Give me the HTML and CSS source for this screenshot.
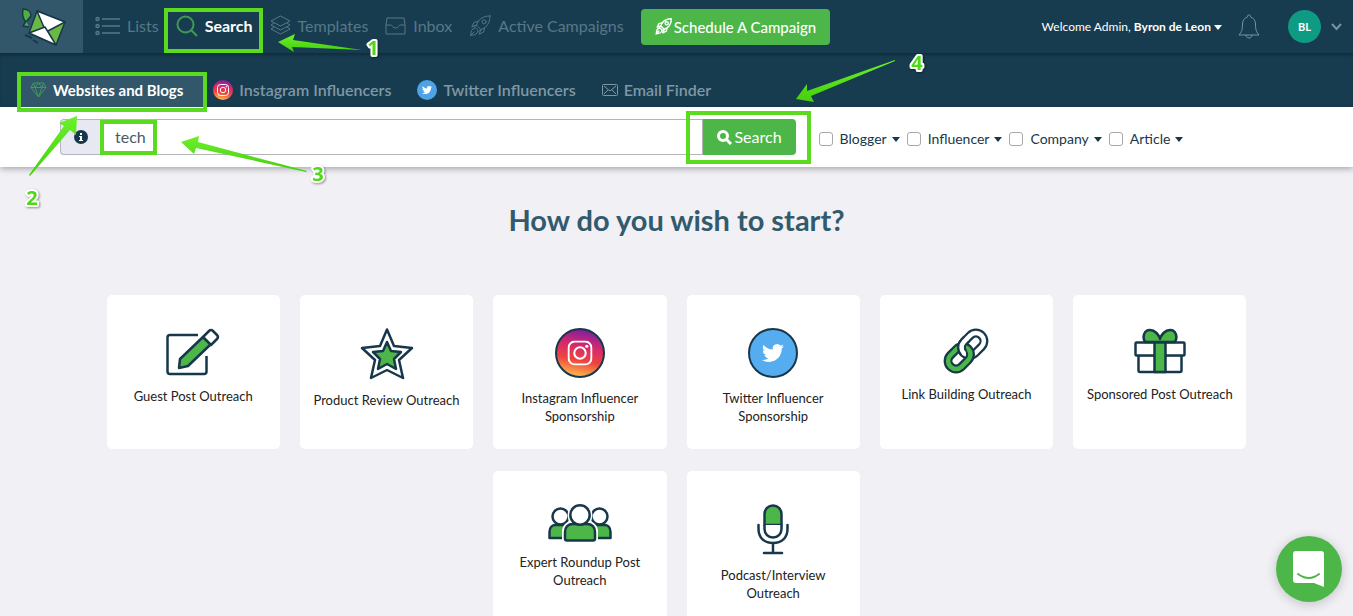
FILE: index.html
```html
<!DOCTYPE html>
<html lang="en">
<head>
  <meta charset="UTF-8" />
  <meta name="viewport" content="width=device-width, initial-scale=1.0" />
  <title>Search - Websites and Blogs</title>
  <link rel="stylesheet" href="styles.css">
</head>
<body>
  <!-- shared icons -->
  <svg class="defs" width="0" height="0" aria-hidden="true">
    <defs>
      <linearGradient id="insta" x1="0.6" y1="0" x2="0.4" y2="1">
        <stop offset="0" stop-color="#7a1fa0" />
        <stop offset="0.35" stop-color="#d62a6c" />
        <stop offset="0.65" stop-color="#ee4440" />
        <stop offset="1" stop-color="#fdc04d" />
      </linearGradient>
      <linearGradient id="arrow" x1="0" y1="0" x2="0" y2="1">
        <stop offset="0" stop-color="#6cf02c" />
        <stop offset="1" stop-color="#45cf0c" />
      </linearGradient>
      <symbol id="bird" viewBox="0 0 24 24">
        <path d="M23.95 4.57a10 10 0 0 1-2.82.77 4.96 4.96 0 0 0 2.16-2.72c-.95.55-2 .96-3.13 1.18a4.92 4.92 0 0 0-8.38 4.48C7.69 8.1 4.07 6.13 1.64 3.16a4.82 4.82 0 0 0-.67 2.48c0 1.71.87 3.21 2.19 4.1a4.9 4.9 0 0 1-2.23-.62v.06a4.92 4.92 0 0 0 3.95 4.83 5 5 0 0 1-2.21.08 4.94 4.94 0 0 0 4.6 3.42A9.87 9.87 0 0 1 0 19.54a13.99 13.99 0 0 0 7.55 2.21c9.05 0 14-7.5 14-13.99 0-.21 0-.42-.02-.63a9.94 9.94 0 0 0 2.46-2.55z" />
      </symbol>
      <symbol id="camera" viewBox="0 0 24 24">
        <g fill="none" stroke="currentColor" stroke-width="2">
          <rect x="1" y="1" width="22" height="22" rx="6" />
          <circle cx="12" cy="12" r="5.5" />
        </g>
        <circle cx="18.5" cy="5.5" r="1.5" fill="currentColor" />
      </symbol>
      <symbol id="rocket" viewBox="0 0 24 24">
        <g fill="none" stroke="currentColor" stroke-linejoin="round" stroke-linecap="round">
          <path d="M23 1c-6 0-10 2-13 6l-2 4 5 5 4-2c4-3 6-7 6-13z" />
          <circle cx="16.500" cy="7.500" r="2.200" />
          <path d="M10 7L5.500 8 3 13l5-2M17 14l-1 4.500L11 21l2-5M8 11l-2 2 5 5 2-2M6 14.500c-3 .5-4 3-4 7.500 4.500 0 7-1 7.500-4M5.500 18.500L1.500 22.500" />
        </g>
      </symbol>
    </defs>
  </svg>

  <header class="topbar">
    <a class="logo" href="#" aria-label="Home">
      <svg width="48" height="42" viewBox="0 0 48 42">
        <g stroke="#17384a" stroke-width="1.500" stroke-linejoin="round">
          <path d="M5 3c5 0 8 3 8 7l-5 6C4 12 4 8 5 3z" fill="#4fae3f" />
          <path d="M8 15l-3 5 6 1" fill="#4fae3f" />
          <path d="M19 5l28 11-9 23-27-12z" fill="#6cb845" />
          <path d="M19 5l28 11-19 10z" fill="#fff" />
          <path d="M11 27l16-6 11 18z" fill="#fff" />
          <path d="M7 29l7 3M15 34l5 3" fill="none" stroke-width="2" />
        </g>
      </svg>
    </a>
    <nav class="main-nav">
      <a href="#">
        <svg width="25" height="20" viewBox="0 0 25 20" fill="none" stroke="currentColor" stroke-width="1.500">
          <circle cx="2.500" cy="3" r="1.500" /><circle cx="2.500" cy="10" r="1.500" /><circle cx="2.500" cy="17" r="1.500" />
          <path d="M7 3h18M7 10h18M7 17h18" />
        </svg>
        Lists
      </a>
      <a href="#" class="active">
        <svg width="22" height="22" viewBox="0 0 22 22" fill="none" stroke="#3f9a55" stroke-width="2">
          <circle cx="9.500" cy="9.500" r="8" /><path d="M15.500 15.500L21 21" />
        </svg>
        Search
      </a>
      <a href="#">
        <svg width="21" height="21" viewBox="0 0 21 21" fill="none" stroke="currentColor" stroke-linejoin="round">
          <path d="M10.500 1L20 6l-9.500 5L1 6zM4 8l-3 2 9.500 5L20 10l-3-2M4 12l-3 2 9.500 5 9.500-5-3-2" />
        </svg>
        Templates
      </a>
      <a href="#">
        <svg width="21" height="18" viewBox="0 0 21 18" fill="none" stroke="currentColor" stroke-linejoin="round">
          <path d="M2 1h17l1 7v9H1V8zM1 8h5c1 0 1.500 3 4.500 3S14 8 15 8h5" />
        </svg>
        Inbox
      </a>
      <a href="#">
        <svg width="22" height="22"><use href="#rocket" /></svg>
        Active Campaigns
      </a>
      <button type="button" class="schedule"><svg width="17" height="17" stroke-width="2"><use href="#rocket" /></svg>Schedule A Campaign</button>
    </nav>
    <div class="user">
      <button type="button" class="welcome">Welcome Admin, <b>Byron de Leon</b> <span class="caret"></span></button>
      <button type="button" class="bell" aria-label="Notifications">
        <svg width="22" height="26" viewBox="0 0 22 26" fill="none" stroke="currentColor" stroke-linejoin="round">
          <path d="M11 1c-1.500 0-1.500 1-1.500 2C6 4 4.500 7 4.500 10c0 6-1 8-3.500 11h20c-2.500-3-3.500-5-3.500-11 0-3-1.500-6-5-7 0-1 0-2-1.500-2zM8 21c0 4 6 4 6 0" />
        </svg>
      </button>
      <span class="avatar">BL</span>
      <button type="button" class="more" aria-label="Account menu">
        <svg width="11" height="8" viewBox="0 0 11 8" fill="none" stroke="currentColor" stroke-width="2"><path d="M1 1l4.500 5L10 1" /></svg>
      </button>
    </div>
  </header>

  <nav class="sub-nav">
    <a href="#" class="active">
      <svg width="17" height="16" viewBox="0 0 17 16" fill="none" stroke="#3f9a55" stroke-linejoin="round">
        <path d="M3.500 1h10L16 5.500 8.500 15 1 5.500zM1 5.500h15M5 5.500L8.500 15 12 5.500 8.500 1 5 5.500 3.500 1M12 5.500L13.500 1" />
      </svg>
      Websites and Blogs
    </a>
    <a href="#">
      <svg width="20" height="20" viewBox="0 0 20 20" color="#fff"><circle cx="10" cy="10" r="10" fill="url(#insta)" /><use href="#camera" x="4" y="4" width="12" height="12" /></svg>
      Instagram Influencers
    </a>
    <a href="#">
      <svg width="20" height="20" viewBox="0 0 20 20" fill="#fff"><circle cx="10" cy="10" r="10" fill="#4da3e6" /><use href="#bird" x="5" y="5" width="10" height="10" /></svg>
      Twitter Influencers
    </a>
    <a href="#">
      <svg width="16" height="12" viewBox="0 0 16 12" fill="none" stroke="currentColor"><rect x="0.500" y="0.500" width="15" height="11" rx="1" /><path d="M2 2l6 5 6-5M2 10l4-4M14 10l-4-4" /></svg>
      Email Finder
    </a>
  </nav>

  <form class="search-bar">
    <div class="search-group">
      <label class="addon" for="keyword" aria-label="Keyword">
        <svg width="14" height="14" viewBox="0 0 14 14"><circle cx="7" cy="7" r="7" fill="#17384a" /><path d="M5 6h3v4h1v1H5v-1h1V7H5zM6 3h2v2H6z" fill="#fff" /></svg>
      </label>
      <input type="text" id="keyword" value="tech">
      <button type="submit">
        <svg width="15" height="15" viewBox="0 0 15 15" fill="none" stroke="#fff" stroke-width="3"><circle cx="6" cy="6" r="4.500" /><path d="M9.500 9.500l4.500 4.500" /></svg>
        Search
      </button>
    </div>
    <div class="filters">
      <label><input type="checkbox">Blogger <span class="caret"></span></label>
      <label><input type="checkbox">Influencer <span class="caret"></span></label>
      <label><input type="checkbox">Company <span class="caret"></span></label>
      <label><input type="checkbox">Article <span class="caret"></span></label>
    </div>
  </form>

  <main>
    <h1>How do you wish to start?</h1>
    <div class="cards">
      <a class="card" href="#">
        <svg width="54" height="48" viewBox="0 0 54 48" fill="none" stroke="#17384a" stroke-width="2.500" stroke-linejoin="round">
          <path d="M32 7H4Q1.500 7 1.500 9.500V43.500Q1.500 46 4 46H38Q40.500 46 40.500 43.500V28" />
          <path d="M37 9l8 7-23 22-9 2 1-9z" fill="#4cb748" />
          <path d="M37 9l6-6q2-2 4 0l4 4q2 2 0 4l-6 6z" fill="#fff" />
        </svg>
        <span>Guest Post Outreach</span>
      </a>
      <a class="card" href="#">
        <svg width="54" height="52" viewBox="0 0 54 52" stroke="#17384a" stroke-width="2.500" stroke-linejoin="round">
          <path d="M27 1.500L34 18l18 2-13 12 4 18-16-8-16 8 4-18L2 20l18-2z" fill="#fff" />
          <path d="M27 14l4 9 10 1-7 7 2 10-9-5-9 5 2-10-7-7 10-1z" fill="#4cb748" />
        </svg>
        <span>Product Review Outreach</span>
      </a>
      <a class="card" href="#">
        <svg width="50" height="50" viewBox="0 0 50 50" color="#fff"><circle cx="25" cy="25" r="24" fill="url(#insta)" stroke="#17384a" stroke-width="2" /><use href="#camera" x="12.500" y="12.500" width="25" height="25" /></svg>
        <span>Instagram Influencer Sponsorship</span>
      </a>
      <a class="card" href="#">
        <svg width="50" height="50" viewBox="0 0 50 50" fill="#fff"><circle cx="25" cy="25" r="24" fill="#55acee" stroke="#17384a" stroke-width="2" /><use href="#bird" x="14" y="14" width="22" height="22" /></svg>
        <span>Twitter Influencer Sponsorship</span>
      </a>
      <a class="card" href="#">
        <svg width="46" height="46" viewBox="0 0 46 46" fill="none">
          <g transform="rotate(-45 23 23)">
            <rect x="20" y="15" width="25" height="16" rx="8" stroke="#17384a" stroke-width="9" />
            <rect x="20" y="15" width="25" height="16" rx="8" stroke="#fff" stroke-width="4.500" />
            <rect x="1" y="15" width="25" height="16" rx="8" stroke="#17384a" stroke-width="9" />
            <rect x="1" y="15" width="25" height="16" rx="8" stroke="#4cb748" stroke-width="4.500" />
            <path d="M20 23a8 8 0 0 1 8-8h4" stroke="#17384a" stroke-width="9" />
            <path d="M20 24v-1a8 8 0 0 1 8-8h5" stroke="#fff" stroke-width="4.500" />
          </g>
        </svg>
        <span>Link Building Outreach</span>
      </a>
      <a class="card" href="#">
        <svg width="52" height="46" viewBox="0 0 52 46" fill="#fff" stroke="#17384a" stroke-width="2.500" stroke-linejoin="round">
          <rect x="4.500" y="27" width="43" height="17" rx="1.500" />
          <rect x="1.500" y="14.500" width="49" height="13" rx="1" />
          <path d="M26 14H11C8 9 10 2 16 2c5 0 9 5 10 9 1-4 5-9 10-9 6 0 8 7 5 12z" fill="#4cb748" />
          <rect x="20.500" y="14.500" width="11" height="29.500" fill="#4cb748" />
        </svg>
        <span>Sponsored Post Outreach</span>
      </a>
      <a class="card" href="#">
        <svg width="64" height="38" viewBox="0 0 64 38" fill="#4cb748" stroke="#17384a" stroke-width="2.500">
          <path d="M1.500 34V28c0-5 3-7 6-7h10c4 0 5 3 5 6v7zM41.500 34V27c0-3 1-6 5-6h10c3 0 6 2 6 7v6z" stroke-linejoin="round" />
          <circle cx="12.500" cy="12.500" r="8" fill="#fff" />
          <circle cx="51.500" cy="12.500" r="8" fill="#fff" />
          <path d="M17 37V28c0-5 3-8 8-8h14c5 0 8 3 8 8v9z" stroke="#fff" stroke-width="6" />
          <circle cx="32" cy="11" r="10" stroke="#fff" stroke-width="5" />
          <path d="M17 34.500V28c0-5 3-8 8-8h14c5 0 8 3 8 8v6.500q0 2-2 2H19q-2 0-2-2z" />
          <circle cx="32" cy="11" r="9.700" fill="#fff" />
        </svg>
        <span>Expert Roundup Post Outreach</span>
      </a>
      <a class="card" href="#">
        <svg width="32" height="51" viewBox="0 0 32 51" fill="none" stroke="#17384a" stroke-width="2.500">
          <path d="M7.500 21V10a8.500 8.500 0 0 1 17 0v11z" fill="#4cb748" />
          <path d="M7.500 21v4a8.500 8.500 0 0 0 17 0v-4" fill="#fff" />
          <path d="M1.500 21v4c0 9 6 14 14.500 14s14.500-5 14.500-14v-4M16 39v10M7 49h18" stroke-linecap="round" />
        </svg>
        <span>Podcast/Interview Outreach</span>
      </a>
    </div>
  </main>

  <button type="button" class="chat" aria-label="Open chat">
    <svg width="32" height="38" viewBox="0 0 32 38"><path d="M3 1h25q3 0 3 3v33l-10-4H3q-3 0-3-3V4q0-3 3-3z" fill="#fff" /><path d="M5 24q11 8 21 0" fill="none" stroke="#4cb748" stroke-width="2" stroke-linecap="round" /></svg>
  </button>

  <!-- walkthrough steps drawn over the page -->
  <svg class="steps" width="1000" height="220" viewBox="0 0 1000 220">
    <g fill="none" stroke="#5bdb1f" stroke-width="4">
      <rect x="166" y="10" width="95" height="41" />
      <rect x="19" y="74" width="186" height="36" />
      <rect x="102" y="122" width="53" height="31" />
      <rect x="688" y="113" width="121" height="49" />
    </g>
    <g fill="url(#arrow)">
      <path d="M278 42l17-8-2 6 69 10-70-3 2 5z" />
      <path d="M77 116l-1 19-6-5-40 46-1-1 35-49-5-3z" />
      <path d="M181 142l18-6-1 6 109 29-1 1-110-24-2 6z" />
      <path d="M796 99l11-15v7l88-31v1l-84 35 3 6z" />
    </g>
    <g class="step-no">
      <text x="373" y="55">1</text>
      <text x="32" y="205">2</text>
      <text x="318" y="181">3</text>
      <text x="917" y="70">4</text>
    </g>
  </svg>
</body>
</html>
```
FILE: styles.css
```css
* {
  box-sizing: border-box;
}
body {
  margin: 0;
  font-family: Lato, "Liberation Sans", sans-serif;
  font-size: 14px;
  line-height: 18px;
  color: #17384a;
  background-color: #f0f0f5;
  min-height: 100vh;
  position: relative;
  overflow-x: hidden;
}
a {
  color: inherit;
  text-decoration: none;
}
button {
  font: inherit;
  color: inherit;
  background: none;
  border: none;
  padding: 0;
  cursor: pointer;
}
svg {
  flex-shrink: 0;
}
.defs {
  position: absolute;
}
.caret {
  display: inline-block;
  border: 4px solid transparent;
  border-top: 5px solid currentColor;
  border-bottom: 0;
  vertical-align: middle;
}

/* top bar */
.topbar {
  display: flex;
  align-items: center;
  height: 53px;
  padding-right: 11px;
  background-color: #183c4f;
  color: #fff;
}
.logo {
  display: flex;
  align-items: center;
  justify-content: center;
  width: 83px;
  height: 53px;
  background-color: #32576a;
}
.main-nav {
  display: flex;
  align-items: center;
  gap: 17px;
  padding-left: 12px;
  font-size: 16px;
  color: #567888;
}
.main-nav a {
  display: flex;
  align-items: center;
  gap: 7px;
  padding-bottom: 2px;
  white-space: nowrap;
}
.main-nav .active,
.sub-nav .active {
  color: #fff;
  font-weight: bold;
}
.schedule {
  display: flex;
  align-items: center;
  gap: 2px;
  height: 36px;
  padding: 0 14px;
  border-radius: 4px;
  background-color: #4cb748;
  color: #fff;
  font-size: 15px;
  font-weight: 500;
  white-space: nowrap;
}
.user {
  display: flex;
  align-items: center;
  gap: 16px;
  margin-left: auto;
}
.welcome {
  font-size: 12px;
  white-space: nowrap;
}
.bell,
.more {
  display: flex;
  color: #7893a0;
}
.avatar {
  width: 33px;
  margin-left: 12px;
  border-radius: 50%;
  background-color: #0f9a84;
  font-size: 11px;
  font-weight: bold;
  line-height: 33px;
  text-align: center;
}
.more {
  margin-left: -6px;
}

/* search type tabs */
.sub-nav {
  display: flex;
  align-items: flex-end;
  gap: 26px;
  height: 54px;
  padding-left: 17px;
  background-color: #183c4f;
  box-shadow: inset 0 3px 3px -1px #102d3c;
  color: #7f97a5;
  font-size: 16px;
  font-weight: 600;
}
.sub-nav a {
  display: flex;
  align-items: center;
  gap: 6px;
  height: 34px;
  white-space: nowrap;
}
.sub-nav .active {
  padding: 0 22px 0 13px;
  margin-right: -18px;
  background-color: #32576a;
  font-size: 15px;
}

/* search form */
.search-bar {
  display: flex;
  align-items: center;
  gap: 23px;
  height: 60px;
  padding: 0 67px 0 60px;
  background-color: #fff;
  box-shadow: 0 2px 6px rgba(0, 0, 0, 0.3);
}
.search-group {
  display: flex;
  width: 60%;
  height: 36px;
}
.addon {
  display: flex;
  align-items: center;
  justify-content: center;
  width: 40px;
  border: 1px solid #b4b4c4;
  border-right: none;
  border-radius: 4px 0 0 4px;
  background-color: #e8e8f2;
}
.search-group input {
  flex: 1;
  min-width: 0;
  padding: 0 15px;
  border: 1px solid #b4b4b8;
  border-left: none;
  font: inherit;
  font-size: 16px;
  color: #4a5a64;
}
.search-group button {
  display: flex;
  align-items: center;
  gap: 2px;
  padding: 0 14px;
  border-radius: 0 4px 4px 0;
  background-color: #4cb748;
  color: #fff;
  font-size: 16px;
}
.filters {
  display: flex;
  gap: 7px;
  padding-top: 4px;
}
.filters label {
  display: flex;
  align-items: center;
  gap: 5px;
}
.filters input {
  appearance: none;
  width: 14px;
  height: 14px;
  margin: 0 2px 0 0;
  border: 1px solid #a8a8ac;
  border-radius: 3px;
  background-color: #fff;
}

/* start options */
main {
  max-width: 1140px;
  margin: 0 auto;
  padding: 35px 0 22px;
}
h1 {
  margin: 0 0 57px;
  font-size: 29px;
  line-height: 36px;
  text-align: center;
  color: #325a6c;
}
.cards {
  display: flex;
  flex-wrap: wrap;
  justify-content: center;
  gap: 22px 20px;
}
.card {
  display: flex;
  flex-direction: column;
  align-items: center;
  gap: 11px;
  width: calc((100% - 100px) / 6);
  min-height: 154px;
  padding: 33px 10px 20px;
  border-radius: 5px;
  background-color: #fff;
  color: #222;
  font-size: 13px;
  text-align: center;
}
.card span {
  max-width: 150px;
}
.chat {
  position: fixed;
  right: 11px;
  bottom: 14px;
  display: flex;
  align-items: center;
  justify-content: center;
  width: 66px;
  height: 66px;
  border-radius: 50%;
  background-color: #4cb748;
  box-shadow: 0 2px 12px rgba(0, 0, 0, 0.2);
}
.steps {
  position: absolute;
  top: 0;
  left: 0;
  pointer-events: none;
}
.step-no {
  font-family: "Open Sans", sans-serif;
  font-size: 20px;
  font-weight: bold;
  text-anchor: middle;
  fill: #4fd81a;
  stroke: #fff;
  stroke-width: 4px;
  stroke-linejoin: round;
  paint-order: stroke;
  filter: drop-shadow(1px 1px 1px rgba(0, 0, 0, 0.4));
}
```
